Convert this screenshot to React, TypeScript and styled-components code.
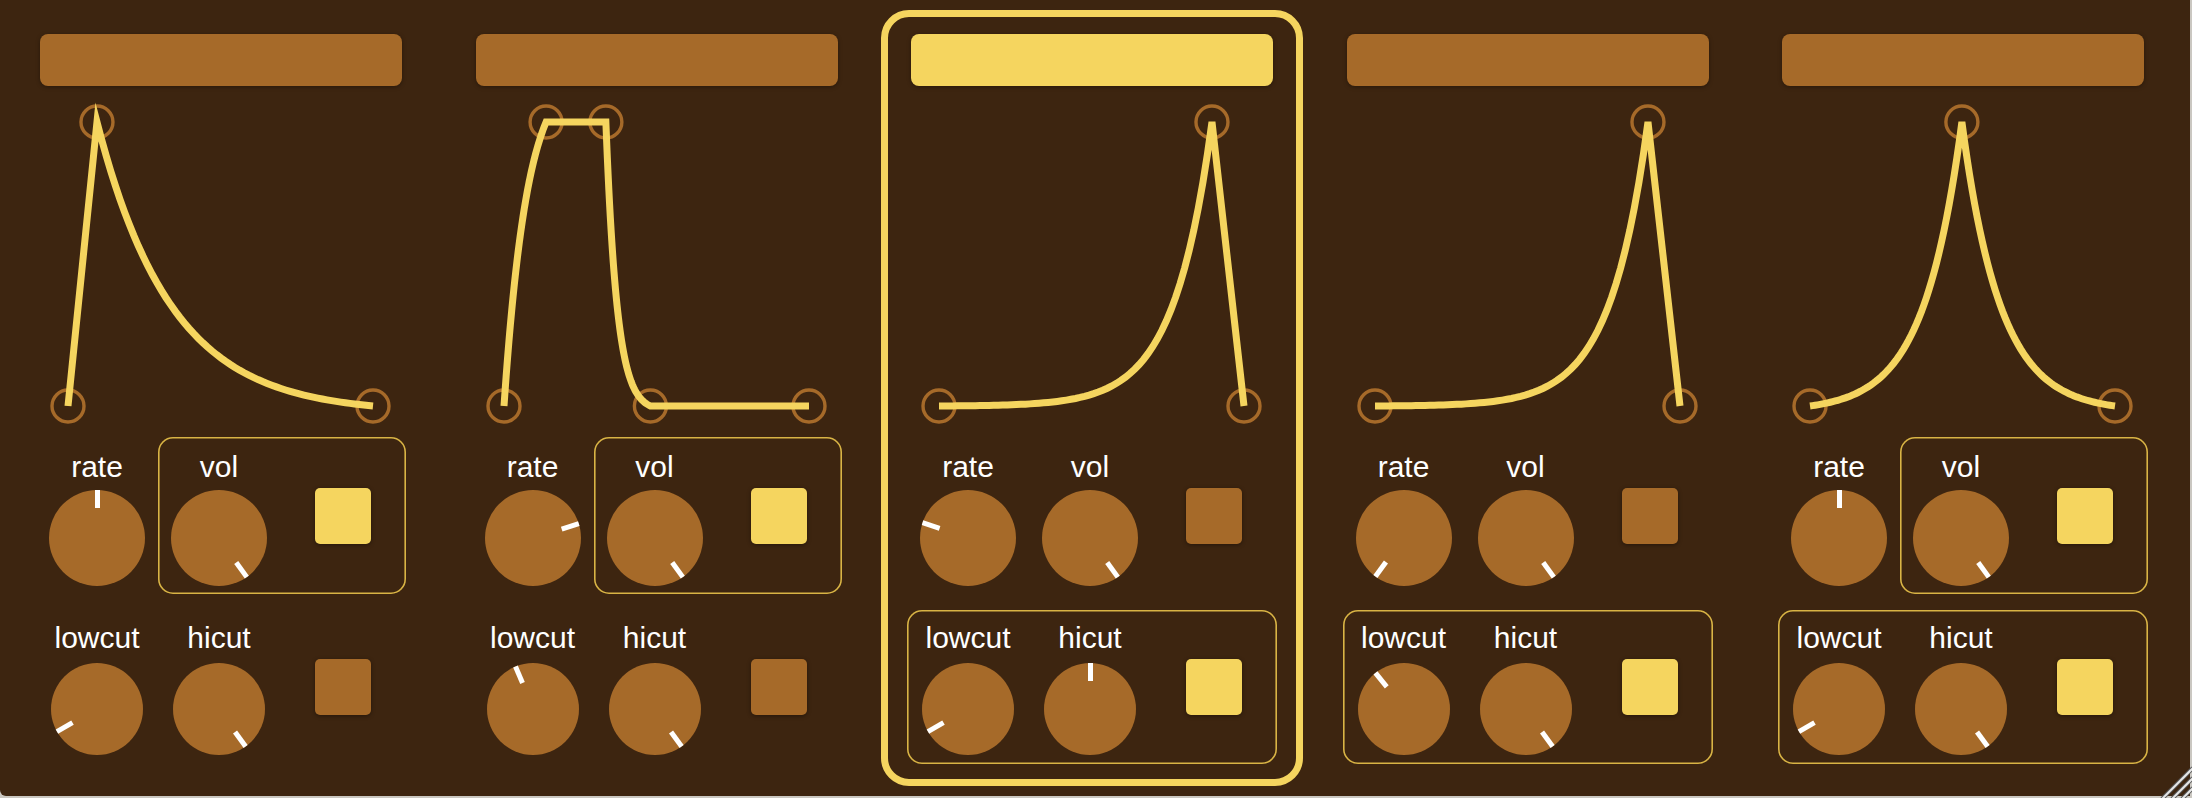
import React from "react";
import styled, { createGlobalStyle } from "styled-components";

const colors = {
    bg: "#3d2510",
    orange: "#a66a29",
    yellow: "#f5d55f",
    frame: "#d9b445",
    chrome: "#cac7c1",
};

type EnvPoint = { t: number; top: boolean; k?: number };

type ModuleData = {
    selected: boolean;
    miter: number;
    env: EnvPoint[];
    rate: number;
    vol: number;
    lowcut: number;
    hicut: number;
    ampOn: boolean;
    filterOn: boolean;
};

const modules: ModuleData[] = [
    {
        selected: false,
        miter: 10,
        env: [{ t: 0, top: false }, { t: 0.095, top: true, k: 0 }, { t: 1, top: false, k: 3.7 }],
        rate: 0,
        vol: 144,
        lowcut: -120,
        hicut: 144,
        ampOn: true,
        filterOn: false,
    },
    {
        selected: false,
        miter: 10,
        env: [
            { t: 0, top: false },
            { t: 0.138, top: true, k: 1.8 },
            { t: 0.334, top: true, k: 0 },
            { t: 0.48, top: false, k: 4 },
            { t: 1, top: false, k: 0 },
        ],
        rate: 72,
        vol: 144,
        lowcut: -23,
        hicut: 144,
        ampOn: true,
        filterOn: false,
    },
    {
        selected: true,
        miter: 4,
        env: [{ t: 0, top: false }, { t: 0.895, top: true, k: -7.2 }, { t: 1, top: false, k: 0 }],
        rate: -72,
        vol: 144,
        lowcut: -120,
        hicut: 0,
        ampOn: false,
        filterOn: true,
    },
    {
        selected: false,
        miter: 4,
        env: [{ t: 0, top: false }, { t: 0.895, top: true, k: -7.2 }, { t: 1, top: false, k: 0 }],
        rate: -144,
        vol: 144,
        lowcut: -39,
        hicut: 144,
        ampOn: false,
        filterOn: true,
    },
    {
        selected: false,
        miter: 4,
        env: [{ t: 0, top: false }, { t: 0.498, top: true, k: -4 }, { t: 1, top: false, k: 4 }],
        rate: 0,
        vol: 144,
        lowcut: -120,
        hicut: 144,
        ampOn: true,
        filterOn: true,
    },
];

// envelope drawing area, in svg units
const X0 = 32;
const X1 = 337;
const Y_TOP = 36;
const Y_BOTTOM = 320;

const ease = (s: number, k: number) => {
    if (k === 0) return s;
    if (k > 0) return (1 - Math.exp(-k * s)) / (1 - Math.exp(-k));
    return (Math.exp(-k * s) - 1) / (Math.exp(-k) - 1);
};

const px = (p: EnvPoint) => X0 + (X1 - X0) * p.t;
const py = (p: EnvPoint) => (p.top ? Y_TOP : Y_BOTTOM);

const buildPath = (pts: EnvPoint[]) => {
    let d = `M${px(pts[0]).toFixed(2)} ${py(pts[0])}`;
    for (let i = 1; i < pts.length; i++) {
        const a = pts[i - 1];
        const b = pts[i];
        const k = b.k ?? 0;
        if (k === 0) {
            d += ` L${px(b).toFixed(2)} ${py(b)}`;
            continue;
        }
        const steps = 60;
        for (let j = 1; j <= steps; j++) {
            const s = j / steps;
            const x = px(a) + (px(b) - px(a)) * s;
            const y = py(a) + (py(b) - py(a)) * ease(s, k);
            d += ` L${x.toFixed(2)} ${y.toFixed(2)}`;
        }
    }
    return d;
};

const GlobalStyle = createGlobalStyle`
    html, body {
        margin: 0;
        padding: 0;
        background: ${colors.chrome};
    }

    body {
        font-family: "Liberation Sans", Arial, sans-serif;
    }
`;

const Window = styled.div`
    position: relative;
    width: 2192px;
    height: 798px;
    overflow: hidden;
    background: ${colors.chrome};
`;

const Panel = styled.div`
    display: flex;
    gap: 13.5px;
    width: 2190px;
    height: 796px;
    box-sizing: border-box;
    padding: 10px 0 0 10px;
    background: ${colors.bg};
    border-bottom-left-radius: 6px;
`;

const Module = styled.section<{ $selected: boolean }>`
    display: flex;
    flex-direction: column;
    flex: 0 0 422px;
    height: 776px;
    box-sizing: border-box;
    padding: 17px 19px 15px;
    border: 7px solid ${({ $selected }) => ($selected ? colors.yellow : "transparent")};
    border-radius: 28px;
`;

const Header = styled.div<{ $selected: boolean }>`
    height: 52px;
    margin: 0 4px;
    border-radius: 8px;
    background: ${({ $selected }) => ($selected ? colors.yellow : colors.orange)};
    box-shadow: 0 1px 4px rgba(0, 0, 0, 0.35);
`;

const EnvelopeSvg = styled.svg`
    display: block;
    width: 370px;
    height: 351px;
`;

const Controls = styled.div`
    display: flex;
    flex-direction: column;
    gap: 16px;
`;

const Row = styled.div<{ $height: number }>`
    display: flex;
    height: ${({ $height }) => $height}px;
`;

const Group = styled.div<{ $active: boolean }>`
    display: flex;
    border-radius: 15px;
    box-shadow: ${({ $active }) => ($active ? `inset 0 0 0 1.6px ${colors.frame}` : "none")};
`;

const Cell = styled.div<{ $wide?: boolean; $top: number }>`
    display: flex;
    flex-direction: column;
    align-items: center;
    width: ${({ $wide }) => ($wide ? 126 : 122)}px;
    padding-top: ${({ $top }) => $top}px;
    box-sizing: border-box;
`;

const Label = styled.div`
    height: 34px;
    line-height: 34px;
    font-size: 30px;
    color: #ffffff;
    white-space: nowrap;
`;

const KnobBody = styled.div<{ $size: number; $gap: number }>`
    position: relative;
    width: ${({ $size }) => $size}px;
    height: ${({ $size }) => $size}px;
    margin-top: ${({ $gap }) => $gap}px;
    border-radius: 50%;
    background: ${colors.orange};
`;

const KnobPointer = styled.div`
    position: absolute;
    inset: 0;

    &::after {
        content: "";
        position: absolute;
        top: 0;
        left: 50%;
        width: 5px;
        height: 18px;
        margin-left: -2.5px;
        background: #ffffff;
    }
`;

const Toggle = styled.button<{ $on: boolean }>`
    display: block;
    width: 56px;
    height: 56px;
    margin-top: 4px;
    padding: 0;
    border: none;
    border-radius: 5px;
    background: ${({ $on }) => ($on ? colors.yellow : colors.orange)};
    box-shadow: 0 1px 4px rgba(0, 0, 0, 0.4);
`;

const Grip = styled.svg`
    position: absolute;
    right: 0;
    bottom: 0;
    width: 36px;
    height: 36px;
`;

type RowSpec = { top: number; gap: number; size: number };

const ROW_AMP: RowSpec = { top: 13, gap: 6, size: 96 };
const ROW_FILTER: RowSpec = { top: 11, gap: 8, size: 92 };

const Knob = ({ label, angle, spec }: { label: string; angle: number; spec: RowSpec }) => (
    <Cell $top={spec.top}>
        <Label>{label}</Label>
        <KnobBody $size={spec.size} $gap={spec.gap}>
            <KnobPointer style={{ transform: `rotate(${angle}deg)` }} />
        </KnobBody>
    </Cell>
);

const ToggleCell = ({ on, spec }: { on: boolean; spec: RowSpec }) => (
    <Cell $wide $top={spec.top}>
        <Label />
        <Toggle $on={on} aria-pressed={on} />
    </Cell>
);

const Envelope = ({ env, miter }: { env: EnvPoint[]; miter: number }) => (
    <EnvelopeSvg viewBox="0 0 370 351">
        {env.map((p, i) => (
            <circle key={i} cx={px(p)} cy={py(p)} r={16} fill="none" stroke={colors.orange} strokeWidth={3.4} />
        ))}
        <path
            d={buildPath(env)}
            fill="none"
            stroke={colors.yellow}
            strokeWidth={7}
            strokeLinejoin="miter"
            strokeMiterlimit={miter}
        />
    </EnvelopeSvg>
);

const LfoModule = ({ data }: { data: ModuleData }) => (
    <Module $selected={data.selected}>
        <Header $selected={data.selected} />
        <Envelope env={data.env} miter={data.miter} />
        <Controls>
            <Row $height={157}>
                <Knob label="rate" angle={data.rate} spec={ROW_AMP} />
                <Group $active={data.ampOn}>
                    <Knob label="vol" angle={data.vol} spec={ROW_AMP} />
                    <ToggleCell on={data.ampOn} spec={ROW_AMP} />
                </Group>
            </Row>
            <Row $height={154}>
                <Group $active={data.filterOn}>
                    <Knob label="lowcut" angle={data.lowcut} spec={ROW_FILTER} />
                    <Knob label="hicut" angle={data.hicut} spec={ROW_FILTER} />
                    <ToggleCell on={data.filterOn} spec={ROW_FILTER} />
                </Group>
            </Row>
        </Controls>
    </Module>
);

const App = () => (
    <Window>
        <GlobalStyle />
        <Panel>
            {modules.map((m, i) => (
                <LfoModule key={i} data={m} />
            ))}
        </Panel>
        <Grip viewBox="0 0 36 36">
            {[6, 16, 26].map((o) => (
                <g key={o}>
                    <line x1={o} y1={37} x2={37} y2={o} stroke="#5a5a5a" strokeWidth={4} />
                    <line x1={o} y1={37} x2={37} y2={o} stroke="#e6e6e6" strokeWidth={2} />
                </g>
            ))}
        </Grip>
    </Window>
);

export default App;
